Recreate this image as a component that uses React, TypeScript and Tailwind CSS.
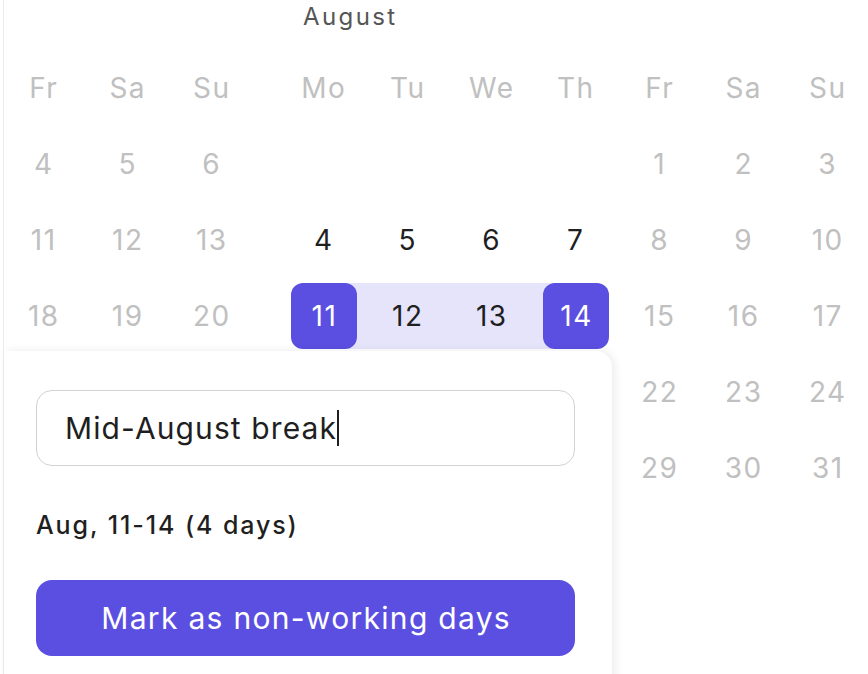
import React from 'react';

const july: (number | null)[][] = [
  [4, 5, 6],
  [11, 12, 13],
  [18, 19, 20],
  [25, 26, 27],
  [null, null, null],
];

const august: (number | null)[][] = [
  [null, null, null, null, 1, 2, 3],
  [4, 5, 6, 7, 8, 9, 10],
  [11, 12, 13, 14, 15, 16, 17],
  [18, 19, 20, 21, 22, 23, 24],
  [25, 26, 27, 28, 29, 30, 31],
];

const weekdays = ['Mo', 'Tu', 'We', 'Th', 'Fr', 'Sa', 'Su'];

const rangeStart = 11;
const rangeEnd = 14;

function DayCell({ day, muted }: { day: number | null; muted: boolean }) {
  const inRange = !muted && day !== null && day >= rangeStart && day <= rangeEnd;
  const isEdge = day === rangeStart || day === rangeEnd;

  return (
    <div className="relative flex h-[76px] w-[84px] items-center justify-center pl-[1.5px]">
      {/* range band */}
      {inRange && (
        <div
          className={
            day === rangeStart
              ? 'absolute left-1/2 right-0 top-[5px] h-[66px] bg-[#e5e4fb]'
              : day === rangeEnd
              ? 'absolute left-0 right-1/2 top-[5px] h-[66px] bg-[#e5e4fb]'
              : 'absolute inset-x-0 top-[5px] h-[66px] bg-[#e5e4fb]'
          }
        />
      )}
      {inRange && isEdge ? (
        <span className="relative flex h-[66px] w-[66px] items-center justify-center rounded-[12px] bg-[#5b4fe1] pl-[1.5px] text-white">
          {day}
        </span>
      ) : (
        <span className={muted ? 'relative text-[#c0c0c0]' : 'relative text-[#1f1f1f]'}>{day ?? ''}</span>
      )}
    </div>
  );
}

export default function App() {
  return (
    <div
      className="relative h-[674px] w-full overflow-hidden bg-white"
      style={{ fontFamily: 'Inter, "Noto Sans", sans-serif' }}
    >
      <div className="absolute left-[3px] top-0 h-full w-px bg-[#ececec]" />

      <div className="flex pl-px text-[28px] leading-none tracking-[1.5px]">
        {/* July (tail) */}
        <div className="flex flex-col">
          <div className="h-[50px]" />
          <div className="flex">
            {['Fr', 'Sa', 'Su'].map((d) => (
              <div key={d} className="flex h-[76px] w-[84px] items-center justify-center pl-[1.5px] text-[#c0c0c0]">
                {d}
              </div>
            ))}
          </div>
          {july.map((row, i) => (
            <div key={i} className="flex">
              {row.map((day, j) => (
                <DayCell key={j} day={day} muted />
              ))}
            </div>
          ))}
        </div>

        {/* August */}
        <div className="ml-[28px] flex flex-col">
          <div className="h-[50px] pl-[22px] text-[24px] leading-[34px] tracking-[2.4px] text-[#555555]">August</div>
          <div className="flex">
            {weekdays.map((d) => (
              <div key={d} className="flex h-[76px] w-[84px] items-center justify-center pl-[1.5px] text-[#c0c0c0]">
                {d}
              </div>
            ))}
          </div>
          {august.map((row, i) => (
            <div key={i} className="flex">
              {row.map((day, j) => (
                <DayCell key={j} day={day} muted={j >= 4} />
              ))}
            </div>
          ))}
        </div>
      </div>

      {/* Popover */}
      <div className="absolute left-[4px] top-[351px] h-[340px] w-[608px] rounded-tr-[16px] bg-white pl-[32px] pt-[39px] shadow-[3px_0_10px_rgba(0,0,0,0.08)]">
        <div className="flex h-[76px] w-[539px] items-center rounded-[16px] border-[1.5px] border-[#d2d2d2] pl-[28px] text-[30px] tracking-[1.1px] text-[#1f1f1f]">
          <span>Mid-August break</span>
          <span className="h-[36px] w-[2px] bg-[#1f1f1f]" />
        </div>
        <div className="mt-[43px] text-[25px] font-medium leading-[32px] tracking-[1.9px] text-[#1f1f1f]">Aug, 11-14 (4 days)</div>
        <button className="mt-[39px] flex h-[76px] w-[539px] items-center justify-center rounded-[16px] bg-[#5b4fe1] pl-[1.3px] text-[30px] tracking-[1.3px] text-white">
          Mark as non-working days
        </button>
      </div>
    </div>
  );
}
